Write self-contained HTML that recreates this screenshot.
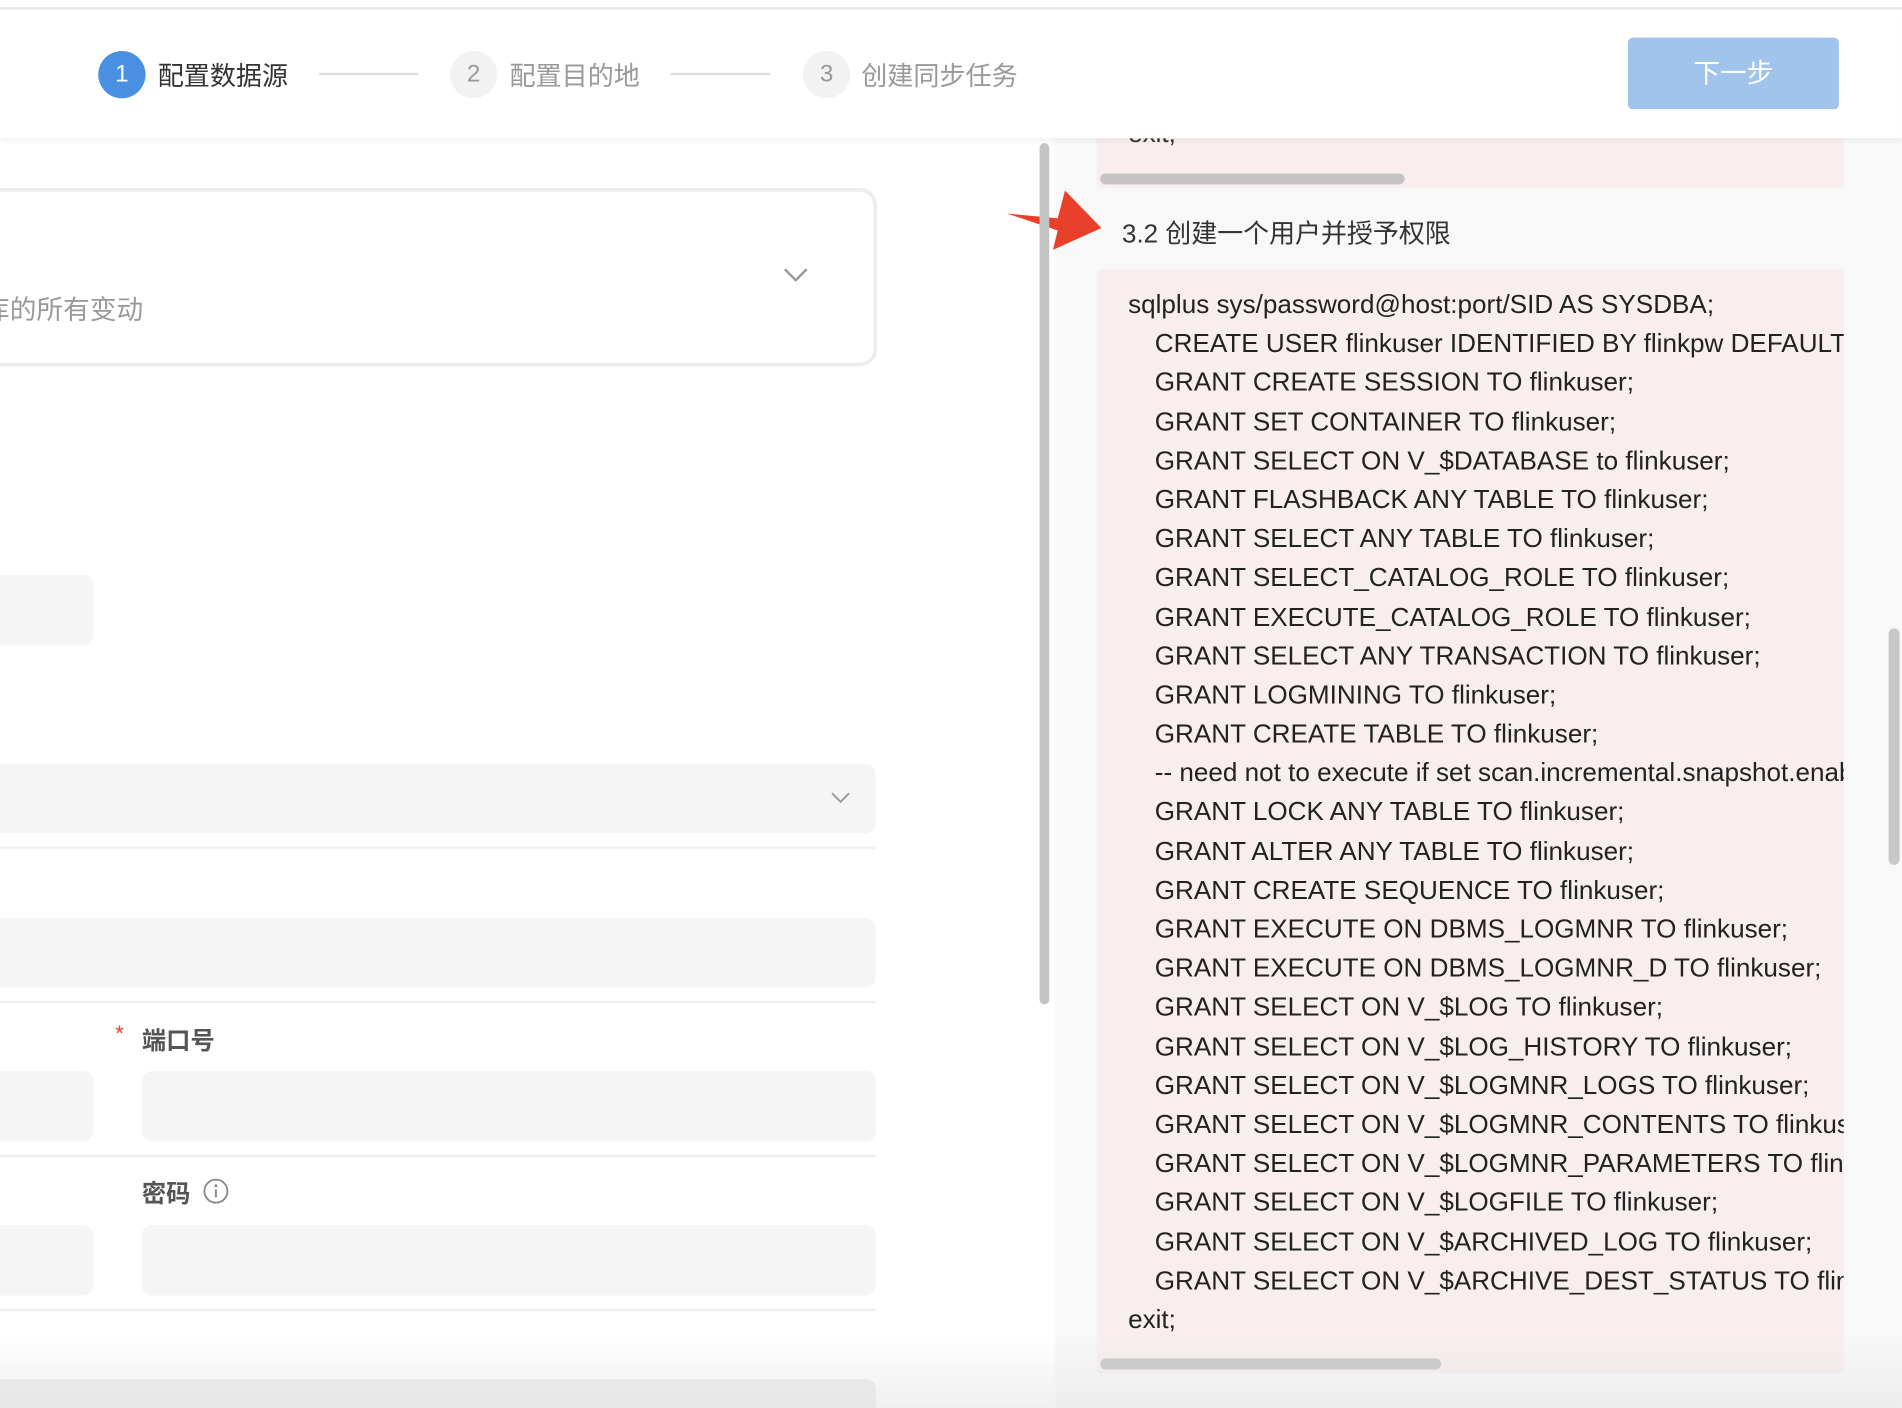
<!DOCTYPE html>
<html><head><meta charset="utf-8"><style>
html,body{margin:0;padding:0;width:1902px;height:1408px;overflow:hidden;background:#fff}
#w{position:absolute;left:0;top:0;width:1568px;height:1161px;transform:scale(1.2130);transform-origin:0 0;font-family:"Liberation Sans","Noto Sans CJK SC",sans-serif;overflow:hidden;background:#fff}
.a{position:absolute}
.code div{height:32.2px;line-height:32.2px;white-space:nowrap;padding-left:22px}
.code div.f{padding-left:0}
</style></head><body><div id="w">
<div class="a" style="left:870px;top:0;width:698px;height:1161px;background:#f8f8f8"></div>
<div class="a" style="left:904px;top:60px;width:616px;height:95px;background:#f8eeee;border-radius:4px"></div>
<div class="a" style="left:930px;top:98px;font-size:21.5px;color:#333">exit;</div>
<div class="a" style="left:907px;top:143px;width:251px;height:9px;background:#c6c4c4;border-radius:5px"></div>
<svg class="a" style="left:828px;top:155px" width="82" height="54"><path d="M2 21 L44 25 L50 2 L80 33 L40 51 L44 35 Z" fill="#e8402a"/></svg>
<div class="a" style="left:925px;top:176px;font-size:21.4px;color:#333">3.2 创建一个用户并授予权限</div>
<div class="a" style="left:904px;top:222px;width:616px;height:910px;background:#f8eeee;border-radius:4px;overflow:hidden">
<div class="code a" style="left:26px;top:13px;font-size:21.5px;color:#222">
<div class="f">sqlplus sys/password@host:port/SID AS SYSDBA;</div>
<div>CREATE USER flinkuser IDENTIFIED BY flinkpw DEFAULT TABLESPACE</div>
<div>GRANT CREATE SESSION TO flinkuser;</div>
<div>GRANT SET CONTAINER TO flinkuser;</div>
<div>GRANT SELECT ON V_$DATABASE to flinkuser;</div>
<div>GRANT FLASHBACK ANY TABLE TO flinkuser;</div>
<div>GRANT SELECT ANY TABLE TO flinkuser;</div>
<div>GRANT SELECT_CATALOG_ROLE TO flinkuser;</div>
<div>GRANT EXECUTE_CATALOG_ROLE TO flinkuser;</div>
<div>GRANT SELECT ANY TRANSACTION TO flinkuser;</div>
<div>GRANT LOGMINING TO flinkuser;</div>
<div>GRANT CREATE TABLE TO flinkuser;</div>
<div>-- need not to execute if set scan.incremental.snapshot.enabled=true</div>
<div>GRANT LOCK ANY TABLE TO flinkuser;</div>
<div>GRANT ALTER ANY TABLE TO flinkuser;</div>
<div>GRANT CREATE SEQUENCE TO flinkuser;</div>
<div>GRANT EXECUTE ON DBMS_LOGMNR TO flinkuser;</div>
<div>GRANT EXECUTE ON DBMS_LOGMNR_D TO flinkuser;</div>
<div>GRANT SELECT ON V_$LOG TO flinkuser;</div>
<div>GRANT SELECT ON V_$LOG_HISTORY TO flinkuser;</div>
<div>GRANT SELECT ON V_$LOGMNR_LOGS TO flinkuser;</div>
<div>GRANT SELECT ON V_$LOGMNR_CONTENTS TO flinkuser;</div>
<div>GRANT SELECT ON V_$LOGMNR_PARAMETERS TO flinkuser;</div>
<div>GRANT SELECT ON V_$LOGFILE TO flinkuser;</div>
<div>GRANT SELECT ON V_$ARCHIVED_LOG TO flinkuser;</div>
<div>GRANT SELECT ON V_$ARCHIVE_DEST_STATUS TO flinkuser;</div>
<div class="f">exit;</div>
</div>
<div class="a" style="left:3px;top:898px;width:281px;height:9px;background:#c6c4c4;border-radius:5px"></div>
</div>
<div class="a" style="left:1557px;top:518px;width:9px;height:195px;background:#c8c8c8;border-radius:5px"></div>
<div class="a" style="left:857px;top:118px;width:8px;height:710px;background:#c4c4c4;border-radius:4px"></div>
<div class="a" style="left:-20px;top:155px;width:737px;height:141px;border:3px solid #ececec;border-radius:14px"></div>
<svg class="a" style="left:645px;top:220px" width="22" height="14"><path d="M2 2 L11 11 L20 2" fill="none" stroke="#999" stroke-width="2"/></svg>
<div class="a" style="left:-14px;top:238px;font-size:22px;color:#999">库的所有变动</div>
<div class="a" style="left:-10px;top:474px;width:87px;height:58px;background:#f5f5f5;border-radius:8px"></div>
<div class="a" style="left:-10px;top:630px;width:732px;height:57px;background:#f5f5f5;border-radius:8px"></div>
<svg class="a" style="left:684px;top:652px" width="18" height="12"><path d="M2 2 L9 9 L16 2" fill="none" stroke="#999" stroke-width="1.6"/></svg>
<div class="a" style="left:0;top:698px;width:722px;height:2px;background:#f0f0f0"></div>
<div class="a" style="left:-10px;top:757px;width:732px;height:57px;background:#f5f5f5;border-radius:8px"></div>
<div class="a" style="left:0;top:825px;width:722px;height:2px;background:#f0f0f0"></div>
<div class="a" style="left:95px;top:842px;font-size:18px;color:#e8402a">*</div>
<div class="a" style="left:117px;top:842px;font-size:20px;color:#555;font-weight:bold">端口号</div>
<div class="a" style="left:-10px;top:883px;width:87px;height:58px;background:#f5f5f5;border-radius:8px"></div>
<div class="a" style="left:117px;top:883px;width:605px;height:58px;background:#f5f5f5;border-radius:8px"></div>
<div class="a" style="left:0;top:952px;width:722px;height:2px;background:#f0f0f0"></div>
<div class="a" style="left:117px;top:968px;font-size:20px;color:#555;font-weight:bold">密码</div>
<svg class="a" style="left:167px;top:971px" width="22" height="22"><circle cx="11" cy="11" r="9.5" fill="none" stroke="#888" stroke-width="1.5"/><circle cx="11" cy="6.5" r="1.2" fill="#888"/><path d="M11 9.5 V16" stroke="#888" stroke-width="1.6"/></svg>
<div class="a" style="left:-10px;top:1010px;width:87px;height:58px;background:#f5f5f5;border-radius:8px"></div>
<div class="a" style="left:117px;top:1010px;width:605px;height:58px;background:#f5f5f5;border-radius:8px"></div>
<div class="a" style="left:0;top:1079px;width:722px;height:2px;background:#f0f0f0"></div>
<div class="a" style="left:-10px;top:1137px;width:732px;height:30px;background:#ececec;border-radius:8px"></div>
<div class="a" style="left:0;top:1100px;width:1568px;height:61px;background:linear-gradient(rgba(255,255,255,0),rgba(225,225,225,0.5))"></div>
<div class="a" style="left:0;top:0;width:1568px;height:114px;background:#fff;box-shadow:0 2px 5px rgba(0,0,0,0.08)"></div>
<div class="a" style="left:0;top:6px;width:1568px;height:2px;background:#e6e6e6"></div>
<div class="a" style="left:81px;top:42px;width:39px;height:39px;border-radius:50%;background:#4a90e2;color:#fff;font-size:20px;line-height:39px;text-align:center">1</div>
<div class="a" style="left:130px;top:46px;font-size:21.5px;color:#333">配置数据源</div>
<div class="a" style="left:263px;top:60px;width:82px;height:2px;background:#ddd"></div>
<div class="a" style="left:371px;top:42px;width:39px;height:39px;border-radius:50%;background:#f2f2f2;color:#999;font-size:20px;line-height:39px;text-align:center">2</div>
<div class="a" style="left:420px;top:46px;font-size:21.5px;color:#999">配置目的地</div>
<div class="a" style="left:553px;top:60px;width:82px;height:2px;background:#ddd"></div>
<div class="a" style="left:662px;top:42px;width:39px;height:39px;border-radius:50%;background:#f2f2f2;color:#999;font-size:20px;line-height:39px;text-align:center">3</div>
<div class="a" style="left:710px;top:46px;font-size:21.5px;color:#999">创建同步任务</div>
<div class="a" style="left:1342px;top:31px;width:174px;height:59px;background:#a0c4ec;border-radius:4px;color:#fff;font-size:22px;line-height:59px;text-align:center">下一步</div>
</div></body></html>
